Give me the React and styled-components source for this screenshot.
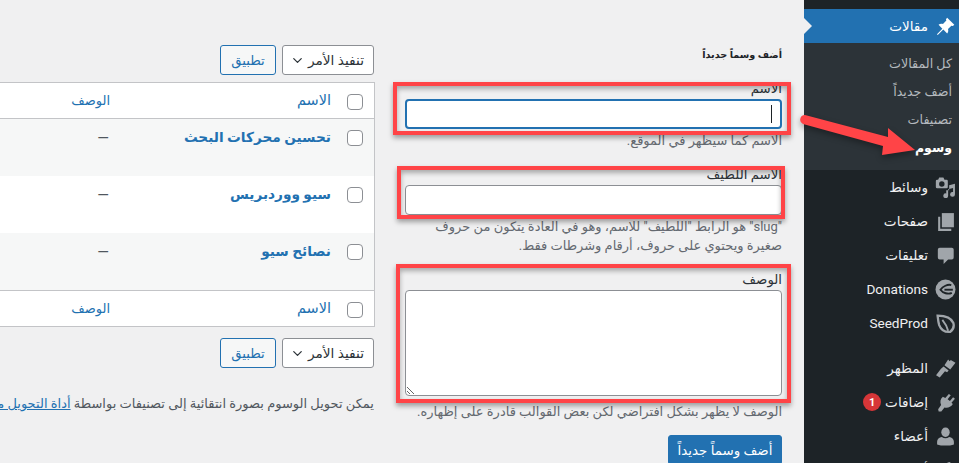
import React from "react";
import styled, { createGlobalStyle } from "styled-components";
import { ChevronDown } from "lucide-react";

const GlobalStyle = createGlobalStyle`
  html, body {
    margin: 0;
    padding: 0;
    background: #f0f0f1;
  }
  * {
    box-sizing: border-box;
  }
`;

const subItems = [
  { name: "كل المقالات" },
  { name: "أضف جديداً" },
  { name: "تصنيفات" },
  { name: "وسوم", current: true },
];

const PinIcon = () => (
  <svg viewBox="0 0 20 20" width="21" height="21" fill="currentColor">
    <path d="M11.600 1.600 18.400 8.400 17 9.600 15.600 9.200 12.400 12.400C12.900 14 12.600 15.600 11.600 16.600L7.900 12.900 2.600 18 1.900 17.400 7 12.100 3.400 8.400C4.400 7.400 6 7.100 7.600 7.600L10.800 4.400 10.400 3Z" />
  </svg>
);

const MediaIcon = () => (
  <svg viewBox="0 0 20 20" width="21" height="21" fill="currentColor">
    <path
      fillRule="evenodd"
      d="M4 0.500H8L9 2.500H11A1.200 1.200 0 0 1 12.200 3.700V9.500A1.200 1.200 0 0 1 11 10.700H2A1.200 1.200 0 0 1 .8 9.500V3.700A1.200 1.200 0 0 1 2 2.500H3ZM6.500 4A2.600 2.600 0 1 0 6.500 9.200 2.600 2.600 0 1 0 6.500 4Z"
    />
    <path d="M19 6.500V16.500A2.300 2.300 0 1 1 17.200 14.300V10.500L12.500 11.600V17.800A2.300 2.300 0 1 1 10.700 15.600V12.500H13.500V7.800Z" />
  </svg>
);

const PagesIcon = () => (
  <svg viewBox="0 0 20 20" width="21" height="21" fill="currentColor">
    <path d="M6.500 2H18V15.500H6.500Z" />
    <path d="M3 5.500H5V17H15.500V19H3Z" />
  </svg>
);

const CommentIcon = () => (
  <svg viewBox="0 0 20 20" width="21" height="21" fill="currentColor">
    <path d="M4.500 2.500H16A1.800 1.800 0 0 1 17.800 4.300V12A1.800 1.800 0 0 1 16 13.800H12.500L8.200 18V13.800H4.500A1.800 1.800 0 0 1 2.700 12V4.300A1.800 1.800 0 0 1 4.500 2.500Z" />
  </svg>
);

const GiveIcon = () => (
  <svg viewBox="0 0 20 20" width="21" height="21" fill="currentColor">
    <circle cx="10" cy="10" r="9.500" />
    <path d="M15.500 5.800C12 4.800 7.500 7 5.200 10.200 7.500 13.400 12.500 15 16 13.200" fill="none" stroke="#1d2327" strokeWidth="1.800" />
    <path d="M9 10.200H17" fill="none" stroke="#1d2327" strokeWidth="1.800" />
  </svg>
);

const LeafIcon = () => (
  <svg viewBox="0 0 20 20" width="21" height="21" fill="none" stroke="currentColor">
    <path strokeWidth="2.200" d="M2.500 2.500C8 2.500 15 3.500 17.500 9.500 18.500 13 17 16 14.500 18 9 18.500 5.500 15.500 4 11.500 3 8.500 2.800 5.500 2.500 2.500Z" />
    <path strokeWidth="1.800" d="M7 6.500C9.500 9.500 11.500 13 12.500 17" />
  </svg>
);

const BrushIcon = () => (
  <svg viewBox="0 0 20 20" width="21" height="21" fill="currentColor">
    <path d="M12.500 1.500 14 3 15 2 19.500 4.500 14.500 11 9 7Z" />
    <path d="M8.200 8 13 11.800 11.500 13.500 9.500 12.500 4.500 18.500 1 16.500 5.500 10.500 6.500 9.500Z" />
  </svg>
);

const PlugIcon = () => (
  <svg viewBox="0 0 20 20" width="21" height="21" fill="currentColor">
    <path d="M13.200 1.800 15 3 12 7 14.200 8.600 17.200 5 19 6.500 15.700 10.200 17 11.500C15 14.500 12 15.600 9 14.800L6 18.500H3.500L3 16.500 5.800 12.300C4.600 9.500 5 6.500 7.500 4.500L9.800 5.800Z" />
  </svg>
);

const UsersIcon = () => (
  <svg viewBox="0 0 20 20" width="21" height="21" fill="currentColor">
    <path d="M10 1.500C12.500 1.500 14 3.500 14 6 14 8.500 12.500 10.500 10 10.500 7.500 10.500 6 8.500 6 6 6 3.500 7.500 1.500 10 1.500Z" />
    <path d="M6.500 10.500C8.500 12 11.500 12 13.500 10.500 16 11 18 12.500 18 15V17.500C14 19 6 19 2 17.500V15C2 12.500 4 11 6.500 10.500Z" />
  </svg>
);

const ToolIcon = () => (
  <svg viewBox="0 0 20 20" width="21" height="21" fill="currentColor">
    <path d="M15 2 11.500 5.500 14.500 8.500 18 5C18.500 8 16 11 13 10.500L6 17.500 2.500 14 9.500 7C9 4 12 1.500 15 2Z" />
  </svg>
);

const menuItems = [
  { name: "وسائط", icon: <MediaIcon /> },
  { name: "صفحات", icon: <PagesIcon /> },
  { name: "تعليقات", icon: <CommentIcon /> },
  { name: "Donations", icon: <GiveIcon /> },
  { name: "SeedProd", icon: <LeafIcon />, last: true },
  { name: "المظهر", icon: <BrushIcon /> },
  { name: "إضافات", icon: <PlugIcon />, badge: 1 },
  { name: "أعضاء", icon: <UsersIcon /> },
  { name: "أدوات", icon: <ToolIcon /> },
];

const terms = [
  { name: "تحسين محركات البحث", alt: true },
  { name: "سيو ووردبريس" },
  { name: "نصائح سيو", alt: true },
];

function BulkBar() {
  return (
    <BulkRow>
      <BulkSelect type="button">
        تنفيذ الأمر
        <ChevronDown size={15} strokeWidth={2} />
      </BulkSelect>
      <ApplyButton type="button">تطبيق</ApplyButton>
    </BulkRow>
  );
}

function HeadRow({ footer }) {
  return (
    <TableRow $head $footer={footer}>
      <CheckCell>
        <CheckBox type="checkbox" />
      </CheckCell>
      <NameCell>
        <HeadLink $wide>الاسم</HeadLink>
      </NameCell>
      <NameCell>
        <HeadLink>الوصف</HeadLink>
      </NameCell>
    </TableRow>
  );
}

export default function App() {
  return (
    <Page>
      <GlobalStyle />
      <Sidebar>
        <ActiveItem>
          <MenuIcon $active>
            <PinIcon />
          </MenuIcon>
          <MenuName>مقالات</MenuName>
          <ActiveNotch />
        </ActiveItem>
        <SubMenu>
          {subItems.map((item) => (
            <SubItem key={item.name} $current={item.current}>
              {item.name}
            </SubItem>
          ))}
        </SubMenu>
        {menuItems.map((item) => (
          <MenuItem key={item.name} $last={item.last}>
            <MenuIcon>{item.icon}</MenuIcon>
            <MenuName>{item.name}</MenuName>
            {item.badge && <Badge>{item.badge}</Badge>}
          </MenuItem>
        ))}
      </Sidebar>

      <Content>
        <FormColumn>
          <FormTitle>أضف وسماً جديداً</FormTitle>
          <Field>
            <FieldLabel>الاسم</FieldLabel>
            <InputWrap>
              <TextInput $focused />
              <Caret />
            </InputWrap>
            <Hint>الاسم كما سيظهر في الموقع.</Hint>
          </Field>
          <Field>
            <FieldLabel>الاسم اللطيف</FieldLabel>
            <TextInput />
            <Hint>
              "slug" هو الرابط "اللطيف" للاسم، وهو في العادة يتكون من حروف
              صغيرة ويحتوي على حروف، أرقام وشرطات فقط.
            </Hint>
          </Field>
          <Field>
            <FieldLabel>الوصف</FieldLabel>
            <DescArea />
            <Hint $spaced>الوصف لا يظهر بشكل افتراضي لكن بعض القوالب قادرة على إظهاره.</Hint>
          </Field>
          <SubmitButton type="button">أضف وسماً جديداً</SubmitButton>
        </FormColumn>

        <TableColumn>
          <BulkBar />
          <TermsTable>
            <HeadRow />
            {terms.map((term) => (
              <TableRow key={term.name} $alt={term.alt}>
                <CheckCell>
                  <CheckBox type="checkbox" />
                </CheckCell>
                <NameCell>
                  <TermLink>{term.name}</TermLink>
                </NameCell>
                <DashCell>—</DashCell>
              </TableRow>
            ))}
            <HeadRow footer />
          </TermsTable>
          <BulkBar />
          <Note>
            يمكن تحويل الوسوم بصورة انتقائية إلى تصنيفات بواسطة{" "}
            <NoteLink>أداة التحويل من التصنيفات إلى الوسوم</NoteLink>.
          </Note>
        </TableColumn>
      </Content>

      <Highlight $x={393} $y={82} $w={398} $h={53} />
      <Highlight $x={397} $y={166} $w={388} $h={53} />
      <Highlight $x={396} $y={264} $w={395} $h={139} />

      <Arrow viewBox="0 0 130 60" width="130" height="60">
        <path d="M5 9 88 31 88 22 115 44 82 49 83 40 3 18A4.700 4.700 0 0 1 5 9Z" />
      </Arrow>
    </Page>
  );
}

const arabicFont = `Roboto, "DejaVu Sans", sans-serif`;

const Page = styled.div`
  position: relative;
  display: flex;
  direction: rtl;
  width: 959px;
  height: 463px;
  overflow: hidden;
  background: #f0f0f1;
  font-family: ${arabicFont};
  font-size: 13px;
  color: #3c434a;
`;

const Sidebar = styled.nav`
  flex: 0 0 155px;
  padding-top: 9px;
  background: #1d2327;
  color: #f0f0f1;
`;

const ActiveItem = styled.div`
  position: relative;
  display: flex;
  align-items: center;
  height: 34px;
  background: #2271b1;
  color: #fff;
`;

const ActiveNotch = styled.span`
  position: absolute;
  left: 0;
  top: 9px;
  border-style: solid;
  border-width: 8px 0 8px 8px;
  border-color: transparent transparent transparent #f0f0f1;
`;

const MenuIcon = styled.span`
  display: flex;
  justify-content: center;
  flex: 0 0 27px;
  margin-left: 4px;
  color: ${(p) => (p.$active ? "#fff" : "#a0a5aa")};
`;

const MenuName = styled.span`
  font-size: 13.6px;
  line-height: 18px;
`;

const SubMenu = styled.div`
  padding: 7px 0 8px;
  background: #2c3338;
`;

const SubItem = styled.div`
  height: 28px;
  padding-right: 7px;
  line-height: 28px;
  font-size: ${(p) => (p.$current ? "12.5px" : "12.7px")};
  font-weight: ${(p) => (p.$current ? 700 : 400)};
  color: ${(p) => (p.$current ? "#fff" : "#b4b9be")};
`;

const MenuItem = styled.div`
  display: flex;
  align-items: center;
  height: 34px;
  margin-bottom: ${(p) => (p.$last ? "11px" : "0")};
`;

const Badge = styled.span`
  display: flex;
  align-items: center;
  justify-content: center;
  width: 18px;
  height: 18px;
  margin-right: 4px;
  border-radius: 50%;
  background: #d63638;
  color: #fff;
  font-size: 11px;
  font-weight: 700;
`;

const Content = styled.main`
  flex: 1;
  display: flex;
  gap: 30px;
  padding: 45px 22px 0 0;
`;

const FormColumn = styled.section`
  flex: 0 0 377px;
`;

const FormTitle = styled.h2`
  margin: 0 0 14px;
  font-size: 9.700px;
  line-height: 20px;
  font-weight: 700;
  color: #1d2327;
`;

const Field = styled.div`
  margin-bottom: 14px;
`;

const FieldLabel = styled.label`
  display: block;
  font-size: 13.300px;
  line-height: 20px;
  color: #2c3338;
`;

const InputWrap = styled.div`
  position: relative;
`;

const TextInput = styled.input`
  display: block;
  width: 100%;
  height: 30px;
  background: #fff;
  border: ${(p) => (p.$focused ? "2px solid #2271b1" : "1px solid #8c8f94")};
  border-radius: 4px;
  outline: none;
`;

const Caret = styled.span`
  position: absolute;
  top: 6px;
  right: 10px;
  width: 1px;
  height: 18px;
  background: #1d2327;
`;

const DescArea = styled.textarea`
  display: block;
  width: 100%;
  height: 106px;
  background: #fff;
  border: 1px solid #8c8f94;
  border-radius: 4px;
  outline: none;
`;

const Hint = styled.p`
  margin: ${(p) => (p.$spaced ? "6px" : "2px")} 0 0;
  font-size: 13px;
  line-height: 19.500px;
  color: #646970;
`;

const SubmitButton = styled.button`
  display: block;
  height: 30px;
  width: 114px;
  margin: 12px 0 0;
  padding: 0;
  border: 1px solid #2271b1;
  border-radius: 3px;
  background: #2271b1;
  color: #fff;
  font-family: ${arabicFont};
  font-size: 13.400px;
`;

const TableColumn = styled.section`
  flex: 0 0 420px;
`;

const BulkRow = styled.div`
  display: flex;
  gap: 6px;
  height: 30px;
  padding-right: 1px;
`;

const BulkSelect = styled.button`
  display: flex;
  align-items: center;
  justify-content: space-between;
  width: 92px;
  padding: 0 9px 0 7px;
  background: #fff;
  border: 1px solid #8c8f94;
  border-radius: 3px;
  color: #2c3338;
  font-family: ${arabicFont};
  font-size: 13.700px;
`;

const ApplyButton = styled.button`
  width: 56px;
  padding: 0;
  background: #f6f7f7;
  border: 1px solid #2271b1;
  border-radius: 3px;
  color: #2271b1;
  font-family: ${arabicFont};
  font-size: 13.200px;
`;

const TermsTable = styled.div`
  margin: 7px 0 11px;
  background: #fff;
  border: 1px solid #c3c4c7;
`;

const TableRow = styled.div`
  display: grid;
  grid-template-columns: 43px 221px 1fr;
  height: ${(p) => (p.$head ? "36px" : "57px")};
  background: ${(p) => (p.$alt ? "#f6f7f7" : "#fff")};
  border-bottom: ${(p) => (p.$head && !p.$footer ? "1px solid #c3c4c7" : "0")};
  border-top: ${(p) => (p.$footer ? "1px solid #c3c4c7" : "0")};
`;

const CheckCell = styled.div`
  padding: 11px 11px 0 0;
`;

const CheckBox = styled.input`
  appearance: none;
  display: block;
  width: 16px;
  height: 16px;
  margin: 0;
  background: #fff;
  border: 1px solid #8c8f94;
  border-radius: 4px;
`;

const NameCell = styled.div`
  padding-top: 8px;
  line-height: 20px;
`;

const DashCell = styled.div`
  padding: 9px 1px 0 0;
  font-size: 15px;
  line-height: 20px;
  color: #50575e;
`;

const HeadLink = styled.span`
  font-size: ${(p) => (p.$wide ? "14.5px" : "13px")};
  color: #2271b1;
`;

const TermLink = styled.span`
  font-size: 13.700px;
  font-weight: 700;
  color: #2271b1;
`;

const Note = styled.p`
  margin: 26px 0 0;
  padding-right: 1px;
  font-size: 13px;
  line-height: 20px;
  white-space: nowrap;
  color: #50575e;
`;

const NoteLink = styled.a`
  color: #2271b1;
  text-decoration: underline;
`;

const Highlight = styled.div`
  position: absolute;
  left: ${(p) => p.$x}px;
  top: ${(p) => p.$y}px;
  width: ${(p) => p.$w}px;
  height: ${(p) => p.$h}px;
  border: 4px solid #ff4447;
  box-shadow: 0 3px 5px rgba(0, 0, 0, 0.35), inset 0 3px 5px rgba(0, 0, 0, 0.3);
  pointer-events: none;
`;

const Arrow = styled.svg`
  position: absolute;
  left: 800px;
  top: 106px;
  fill: #ff4447;
  filter: drop-shadow(0 3px 3px rgba(0, 0, 0, 0.35));
  pointer-events: none;
`;
